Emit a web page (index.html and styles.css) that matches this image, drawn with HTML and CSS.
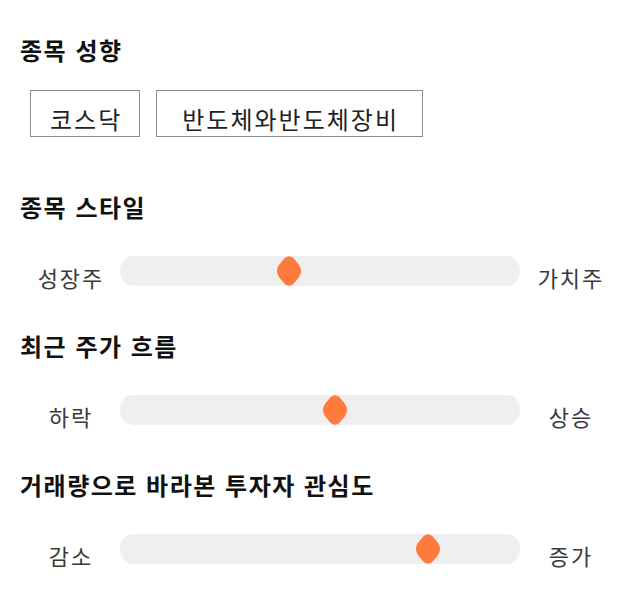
FILE: index.html
```html
<!DOCTYPE html>
<html lang="ko">
<head>
  <meta charset="UTF-8" />
  <meta name="viewport" content="width=device-width, initial-scale=1.0" />
  <title>종목 분석</title>
  <link rel="stylesheet" href="styles.css">
</head>
<body>
  <!-- 종목 성향 -->
  <div class="section">
    <div class="title">종목 성향</div>
    <div class="tag-list">
      <span class="tag">코스닥</span>
      <span class="tag tag-wide">반도체와반도체장비</span>
    </div>
  </div>

  <!-- 종목 스타일 -->
  <div class="section">
    <div class="title">종목 스타일</div>
    <div class="slider-row">
      <span class="slider-label">성장주</span>
      <div class="track">
        <div class="thumb" style="left: 169px;"></div>
      </div>
      <span class="slider-label">가치주</span>
    </div>
  </div>

  <!-- 최근 주가 흐름 -->
  <div class="section">
    <div class="title">최근 주가 흐름</div>
    <div class="slider-row">
      <span class="slider-label">하락</span>
      <div class="track">
        <div class="thumb" style="left: 215px;"></div>
      </div>
      <span class="slider-label">상승</span>
    </div>
  </div>

  <!-- 투자자 관심도 -->
  <div class="section">
    <div class="title">거래량으로 바라본 투자자 관심도</div>
    <div class="slider-row">
      <span class="slider-label">감소</span>
      <div class="track">
        <div class="thumb" style="left: 308px;"></div>
      </div>
      <span class="slider-label">증가</span>
    </div>
  </div>
</body>
</html>
```

FILE: styles.css
```css
body {
  margin: 0;
  padding: 34px 0 0;
  font-family: "Noto Sans CJK KR", "Noto Sans", sans-serif;
  background: #ffffff;
  color: #111111;
}

.section {
  margin-bottom: 38px;
}

.section:first-child {
  margin-bottom: 54px;
}

/* Section titles */
.title {
  padding-left: 20px;
  font-size: 24px;
  font-weight: 700;
  line-height: 32px;
  letter-spacing: 1.5px;
  margin-bottom: 33px;
}

.section:first-child .title {
  margin-bottom: 24px;
}

/* Tags */
.tag-list {
  display: flex;
  gap: 16px;
  padding-left: 30px;
}

.tag {
  display: block;
  padding: 10px 17px 0 19px;
  height: 35px;
  line-height: 35px;
  font-size: 24px;
  letter-spacing: 2px;
  color: #222222;
  border: 1px solid #8c8c8c;
}

.tag-wide {
  padding: 10px 23px 0 25px;
}

/* Sliders */
.slider-row {
  display: grid;
  grid-template-columns: 80px 1fr 80px;
  column-gap: 10px;
  align-items: start;
  padding: 0 30px;
}

.slider-label {
  padding-top: 6px;
  line-height: 30px;
  font-size: 22px;
  letter-spacing: 2px;
  text-indent: 2px;
  color: #3a3a3a;
  text-align: center;
}

.track {
  position: relative;
  height: 30px;
  background: #efefef;
  border-radius: 13px / 15px;
}

.thumb {
  position: absolute;
  top: 0;
  width: 24px;
  height: 30px;
  margin-left: -12px;
}

.thumb::before {
  content: "";
  position: absolute;
  left: -1px;
  top: 2px;
  width: 26px;
  height: 26px;
  background: #ff7a3d;
  border-radius: 9px;
  transform: scale(0.82, 1) rotate(45deg);
}
```
